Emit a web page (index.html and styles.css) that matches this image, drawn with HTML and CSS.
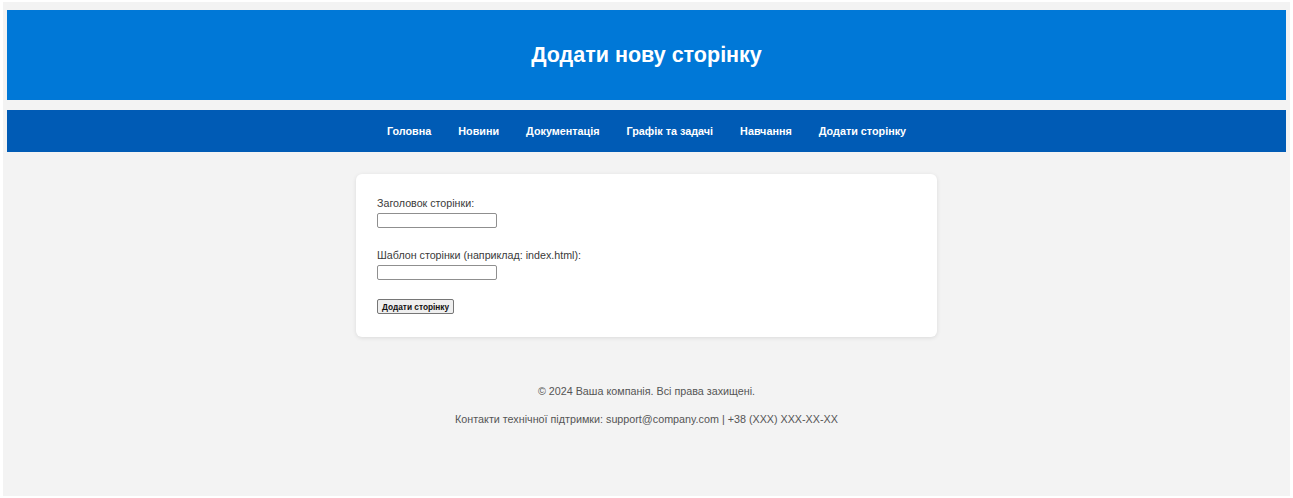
FILE: index.html
```html
<!DOCTYPE html>
<html lang="uk">
<head>
<meta charset="utf-8">
<title>Додати нову сторінку</title>
<link rel="stylesheet" href="styles.css">
</head>
<body>
<div class="page">
  <header class="site-header">
    <h1>Додати нову сторінку</h1>
  </header>
  <nav class="site-nav">
    <a href="#">Головна</a>
    <a href="#">Новини</a>
    <a href="#">Документація</a>
    <a href="#">Графік та задачі</a>
    <a href="#">Навчання</a>
    <a href="#">Додати сторінку</a>
  </nav>
  <main class="content">
    <form class="card">
      <div class="field">
        <label for="title">Заголовок сторінки:</label>
        <input id="title" type="text">
      </div>
      <div class="field field-last">
        <label for="template">Шаблон сторінки (наприклад: index.html):</label>
        <input id="template" type="text">
      </div>
      <button type="submit" class="btn">Додати сторінку</button>
    </form>
  </main>
  <footer class="site-footer">
    <p>© 2024 Ваша компанія. Всі права захищені.</p>
    <p>Контакти технічної підтримки: support@company.com | +38 (XXX) XXX-XX-XX</p>
  </footer>
</div>
</body>
</html>
```
FILE: styles.css
```css
html {
  background: #ffffff;
}

body {
  margin: 0;
  padding: 2px 3px 2px 3px;
  font-family: "Liberation Sans", Arial, sans-serif;
}

.page {
  box-sizing: border-box;
  min-height: 494px;
  background: #f3f3f3;
  padding: 8px 4px 20px;
}

.site-header {
  height: 90px;
  background: #0078d7;
  display: flex;
  align-items: center;
  justify-content: center;
}

.site-header h1 {
  margin: 0;
  color: #ffffff;
  font-size: 21.5px;
  font-weight: bold;
}

.site-nav {
  margin-top: 10px;
  height: 42px;
  background: #005bb5;
  display: flex;
  align-items: center;
  justify-content: center;
  gap: 27px;
}

.site-nav a {
  color: #ffffff;
  text-decoration: none;
  font-weight: bold;
  font-size: 10.8px;
}

.content {
  padding-top: 22px;
}

.card {
  box-sizing: border-box;
  width: 581px;
  height: 163px;
  margin: 0 auto;
  background: #ffffff;
  border-radius: 6px;
  box-shadow: 0 1px 4px rgba(0, 0, 0, 0.1);
  padding: 23px 21px;
}

.field {
  display: flex;
  flex-direction: column;
  align-items: flex-start;
  margin-bottom: 21px;
}

.field-last {
  margin-bottom: 19px;
}

.field label {
  font-size: 10.7px;
  color: #3a3a3a;
  margin-bottom: 4px;
}

.field input {
  box-sizing: border-box;
  width: 120px;
  height: 15px;
  border: 1px solid #8f8f8f;
  border-radius: 2px;
  padding: 0 2px;
  font-size: 10px;
}

.btn {
  display: block;
  box-sizing: border-box;
  height: 15px;
  padding: 0 4px;
  font-family: "Liberation Sans", Arial, sans-serif;
  font-size: 8.3px;
  font-weight: bold;
  color: #111111;
  background: #efefef;
  border: 1px solid #767676;
  border-radius: 2px;
}

.site-footer {
  padding-top: 48px;
  text-align: center;
  color: #555555;
  font-size: 10.75px;
}

.site-footer p {
  margin: 0 0 16px;
}
```
